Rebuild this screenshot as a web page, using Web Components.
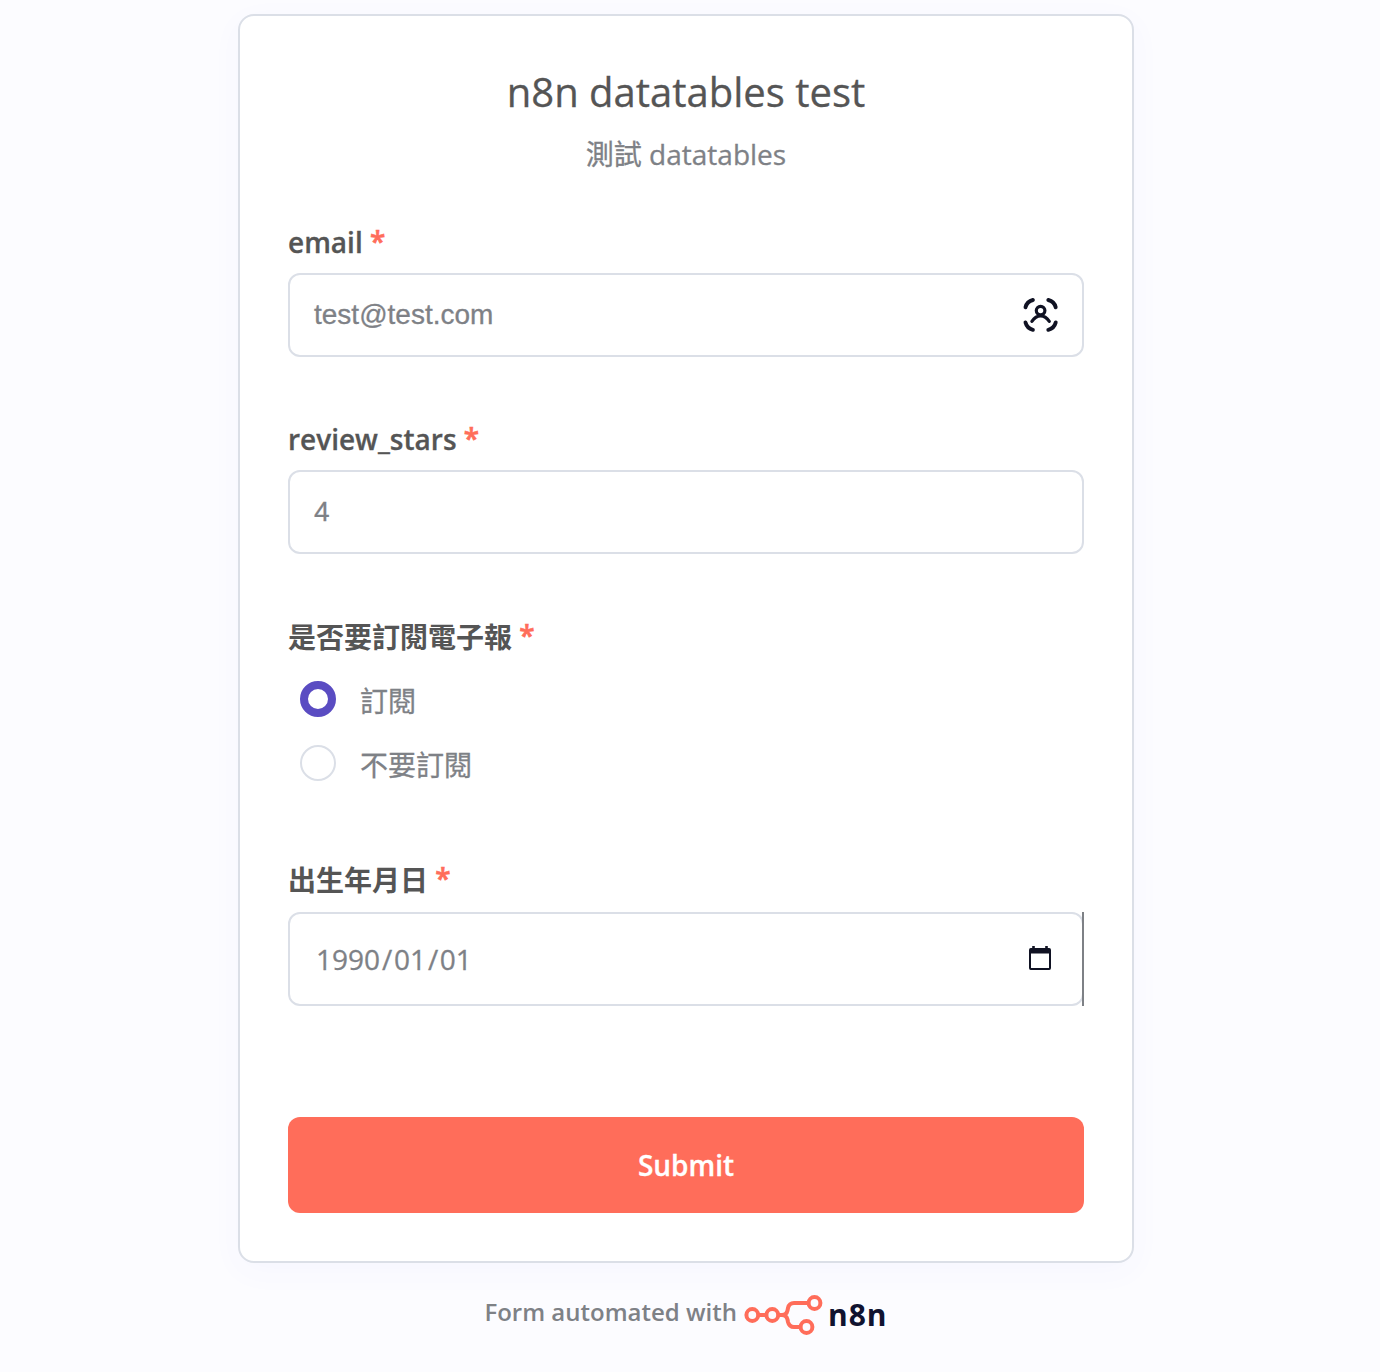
<!DOCTYPE html>
<html lang="zh-Hant">
<head>
<meta charset="utf-8">
<title>n8n datatables test</title>
<style>
html,body{margin:0;height:100%}
body{background:#fcfcff;font-family:"Open Sans","Noto Sans CJK TC",sans-serif;color:#7e8186;overflow:hidden;-webkit-text-stroke:.3px}
</style>
</head>
<body>
<form-page>
  <form-card heading="n8n datatables test" subtitle="測試 datatables">
    <form-field label="email"><text-input value="test@test.com"><contact-icon></contact-icon></text-input></form-field>
    <form-field label="review_stars"><text-input value="4"></text-input></form-field>
    <form-field label="是否要訂閱電子報" class="choices">
      <radio-option checked>訂閱</radio-option>
      <radio-option>不要訂閱</radio-option>
    </form-field>
    <form-field label="出生年月日" class="birthday"><date-input year="1990" month="01" day="01"></date-input></form-field>
    <submit-button slot="action">Submit</submit-button>
  </form-card>
  <form-credit></form-credit>
</form-page>
<script>
function define(name, markup, setup) {
  customElements.define(name, class extends HTMLElement {
    connectedCallback() {
      if (this.shadowRoot) return;
      const root = this.attachShadow({mode: 'open'});
      root.innerHTML = markup;
      if (setup) setup(this, root);
    }
  });
}
define('form-page', `<style>
:host{display:flex;flex-direction:column;align-items:center;padding:14px 8px 0 0;box-sizing:border-box}
</style><slot></slot>`);
define('form-card', `<style>
:host{display:flex;flex-direction:column;box-sizing:border-box;width:896px;height:1249px;padding:48px;border:2px solid #dbdfe7;border-radius:16px;background:#fff;box-shadow:0 8px 32px rgba(99,77,255,.035)}
header{text-align:center;height:160px}
h1{margin:0;font-size:40px;font-weight:400;line-height:56px;color:#555}
p{margin:16px 0 0;font-size:28px;line-height:36px}
.fields{display:flex;flex-direction:column;gap:64px}
footer{margin-top:auto}
</style><header><h1></h1><p></p></header><div class="fields"><slot></slot></div><footer><slot name="action"></slot></footer>`,
(el, root) => {
  root.querySelector('h1').textContent = el.getAttribute('heading');
  root.querySelector('p').textContent = el.getAttribute('subtitle');
});
define('form-field', `<style>
:host{display:flex;flex-direction:column;gap:13px}
:host(.choices){gap:12px;padding-top:1px}
:host(.birthday){gap:14px;padding-top:3px}
label{display:flex;font-size:28px;font-weight:600;line-height:36px;height:36px;color:#555;white-space:pre}
b{font-weight:600;color:#ff6d5a;-webkit-text-stroke:.6px;margin-top:-1px}
:host(.choices) span,:host(.birthday) span{-webkit-text-stroke:0}
:host(.choices) b,:host(.birthday) b{margin-top:-2px}
</style><label><span></span><b> *</b></label><div><slot></slot></div>`,
(el, root) => { root.querySelector('span').textContent = el.getAttribute('label'); });
define('text-input', `<style>
:host{display:flex;align-items:center;justify-content:space-between;box-sizing:border-box;height:84px;padding:0 23px 0 24px;border:2px solid #dbdfe7;border-radius:12px;background:#fff;font:28px/32px "Liberation Sans",sans-serif}
</style><span></span><slot></slot>`,
(el, root) => { root.querySelector('span').textContent = el.getAttribute('value'); });
define('contact-icon', `<style>:host{display:block;width:36px;height:36px}svg{display:block}</style>
<svg width="36" height="36" viewBox="0 0 36 36" fill="none" stroke="#101223" stroke-linecap="round">
<g stroke-width="3.9"><path d="M2.5 10.3Q4 4.4 9.9 3"/><path d="M25.3 3Q31.2 4.4 32.7 10.3"/><path d="M2.5 25.5Q4 31.4 9.9 32.8"/><path d="M25.3 32.8Q31.2 31.4 32.7 25.5"/></g>
<g stroke-width="3.2"><circle cx="17.6" cy="13.6" r="4.3"/><path d="M8.9 24.4Q12.6 18.8 17.6 18.8T26.3 24.4"/></g></svg>`);
define('radio-option', `<style>
:host{display:flex;align-items:center;gap:24px;height:64px;padding-left:12px;font-size:28px;line-height:36px}
i{box-sizing:border-box;width:36px;height:36px;border:2px solid #dbdfe7;border-radius:50%;background:#fff}
:host([checked]) i{border:8px solid #5a4cc2}
span{margin-top:4px}
</style><i></i><span><slot></slot></span>`);
define('date-input', `<style>
:host{position:relative;display:flex;align-items:center;justify-content:space-between;box-sizing:border-box;height:94px;padding:0 30px 0 25px;border:2px solid #dbdfe7;border-radius:12px;background:#fff;font-size:28px;line-height:38px}
:host::after{content:"";position:absolute;right:-2px;top:-2px;bottom:-2px;width:2px;background:#7e8186}
.date{display:flex}
.date span{padding:0 2px 0 1.6px}
.date .y{padding-left:1px}
svg{display:block;margin-top:-2px}
</style><div class="date"><span class="y"></span>/<span class="m"></span>/<span class="d"></span></div>
<svg width="23" height="26" viewBox="0 0 23 26" fill="#101223"><path fill-rule="evenodd" d="M3.2 1H5.8V3H16.2V1H18.8V3H20.2Q22 3 22 5V23Q22 25 20.2 25H1.8Q0 25 0 23V5Q0 3 1.8 3H3.2ZM2 8.5V23H20V8.5Z"/></svg>`,
(el, root) => {
  root.querySelector('.y').textContent = el.getAttribute('year');
  root.querySelector('.m').textContent = el.getAttribute('month');
  root.querySelector('.d').textContent = el.getAttribute('day');
});
define('submit-button', `<style>
:host{display:block}
button{display:block;width:100%;height:96px;padding:0;border:0;border-radius:12px;background:#ff6d5a;color:#fff;font:600 28px/38px "Open Sans",sans-serif}
</style><button><slot></slot></button>`);
define('form-credit', `<style>
:host{display:flex;align-items:center;height:42px;margin-top:31px;font-size:24px;font-weight:600;line-height:32px}
svg{display:block;margin-left:6px}
.lead{margin-top:-6px;-webkit-text-stroke:0}
.brand{margin-left:5px;font-size:30px;font-weight:700;letter-spacing:1px;line-height:40px;color:#101330;-webkit-text-stroke:0}
</style><span class="lead">Form automated with</span>
<svg width="80" height="42" viewBox="0 0 80 42" fill="none" stroke="#ff6d5a" stroke-width="4"><circle cx="9.3" cy="21" r="5.9"/><circle cx="29.3" cy="21" r="5.9"/><circle cx="71.5" cy="9" r="5.9"/><circle cx="63.5" cy="33" r="5.9"/><path d="M15 21H23.5M35 21H39Q43.5 21 44.5 16.5L45 14Q46.2 9 51 9H65.5M39 21Q43.5 21 44.5 25.5L45 28Q46.2 33 51 33H57.5"/></svg>
<span class="brand">n8n</span>`);
</script>
</body>
</html>
